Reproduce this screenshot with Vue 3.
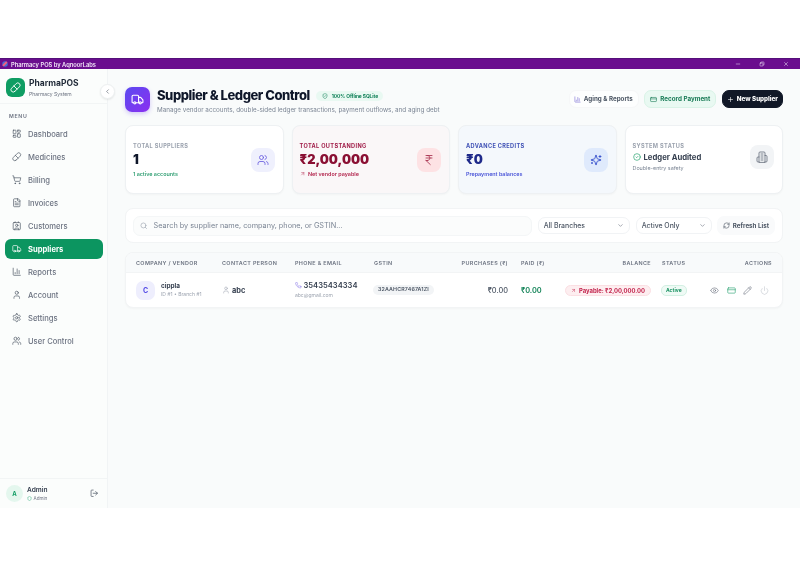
<script setup>
const c = (x, y, r) => `<circle cx="${x}" cy="${y}" r="${r}"/>`
const p = (...ds) => ds.map((d) => `<path d="${d}"/>`).join('')
const r = (x, y, w, h, rx) => `<rect x="${x}" y="${y}" width="${w}" height="${h}" rx="${rx}"/>`
const icons = {
  dashboard: r(3, 3, 7, 9, 1) + r(14, 3, 7, 5, 1) + r(14, 12, 7, 9, 1) + r(3, 16, 7, 5, 1),
  pill: p('m10.5 20.5 10-10a4.95 4.95 0 1 0-7-7l-10 10a4.95 4.95 0 1 0 7 7Z', 'm8.5 8.5 7 7'),
  cart: c(8, 21, 1) + c(19, 21, 1) + p('M2.05 2.05h2l2.66 12.42a2 2 0 0 0 2 1.58h9.78a2 2 0 0 0 1.95-1.57l1.65-7.43H5.12'),
  file: p('M15 2H6a2 2 0 0 0-2 2v16a2 2 0 0 0 2 2h12a2 2 0 0 0 2-2V7Z', 'M14 2v4a2 2 0 0 0 2 2h4', 'M10 9H8', 'M16 13H8', 'M16 17H8'),
  contact: p('M16 2v2', 'M7 22v-2a2 2 0 0 1 2-2h6a2 2 0 0 1 2 2v2', 'M8 2v2') + c(12, 11, 3) + r(3, 4, 18, 18, 2),
  truck: p('M14 18V6a2 2 0 0 0-2-2H4a2 2 0 0 0-2 2v11a1 1 0 0 0 1 1h2', 'M15 18H9', 'M19 18h2a1 1 0 0 0 1-1v-3.65a1 1 0 0 0-.22-.624l-3.48-4.35A1 1 0 0 0 17.52 8H14') + c(17, 18, 2) + c(7, 18, 2),
  chart: p('M3 3v16a2 2 0 0 0 2 2h16', 'M18 17V9', 'M13 17V5', 'M8 17v-3'),
  user: p('M19 21v-2a4 4 0 0 0-4-4H9a4 4 0 0 0-4 4v2') + c(12, 7, 4),
  settings: p('M12.22 2h-.44a2 2 0 0 0-2 2v.18a2 2 0 0 1-1 1.73l-.43.25a2 2 0 0 1-2 0l-.15-.08a2 2 0 0 0-2.73.73l-.22.38a2 2 0 0 0 .73 2.73l.15.1a2 2 0 0 1 1 1.72v.51a2 2 0 0 1-1 1.74l-.15.09a2 2 0 0 0-.73 2.73l.22.38a2 2 0 0 0 2.73.73l.15-.08a2 2 0 0 1 2 0l.43.25a2 2 0 0 1 1 1.73V20a2 2 0 0 0 2 2h.44a2 2 0 0 0 2-2v-.18a2 2 0 0 1 1-1.73l.43-.25a2 2 0 0 1 2 0l.15.08a2 2 0 0 0 2.73-.73l.22-.39a2 2 0 0 0-.73-2.73l-.15-.08a2 2 0 0 1-1-1.74v-.5a2 2 0 0 1 1-1.74l.15-.09a2 2 0 0 0 .73-2.73l-.22-.38a2 2 0 0 0-2.73-.73l-.15.08a2 2 0 0 1-2 0l-.43-.25a2 2 0 0 1-1-1.73V4a2 2 0 0 0-2-2z') + c(12, 12, 3),
  users: p('M16 21v-2a4 4 0 0 0-4-4H6a4 4 0 0 0-4 4v2', 'M22 21v-2a4 4 0 0 0-3-3.87', 'M16 3.13a4 4 0 0 1 0 7.75') + c(9, 7, 4),
  logout: p('M9 21H5a2 2 0 0 1-2-2V5a2 2 0 0 1 2-2h4', 'm16 17 5-5-5-5', 'M21 12H9'),
  shield: p('M20 13c0 5-3.5 7.5-7.66 8.95a1 1 0 0 1-.67-.01C7.5 20.5 4 18 4 13V6a1 1 0 0 1 1-1c2 0 4.5-1.2 6.24-2.72a1.17 1.17 0 0 1 1.52 0C14.51 3.81 17 5 19 5a1 1 0 0 1 1 1z'),
  shieldCheck: p('M20 13c0 5-3.5 7.5-7.66 8.95a1 1 0 0 1-.67-.01C7.5 20.5 4 18 4 13V6a1 1 0 0 1 1-1c2 0 4.5-1.2 6.24-2.72a1.17 1.17 0 0 1 1.52 0C14.51 3.81 17 5 19 5a1 1 0 0 1 1 1z', 'm9 12 2 2 4-4'),
  chevronLeft: p('m15 18-6-6 6-6'),
  chevronDown: p('m6 9 6 6 6-6'),
  card: r(2, 5, 20, 14, 2) + p('M2 10h20'),
  plus: p('M5 12h14', 'M12 5v14'),
  rupee: p('M6 3h12', 'M6 8h12', 'm6 13 8.5 8', 'M6 13h3', 'M9 13c6.667 0 6.667-10 0-10'),
  arrowUpRight: p('M7 7h10v10', 'M7 17 17 7'),
  sparkles: p('M9.937 15.5A2 2 0 0 0 8.5 14.063l-6.135-1.582a.5.5 0 0 1 0-.962L8.5 9.936A2 2 0 0 0 9.937 8.5l1.582-6.135a.5.5 0 0 1 .963 0L14.063 8.5A2 2 0 0 0 15.5 9.937l6.135 1.581a.5.5 0 0 1 0 .964L15.5 14.063a2 2 0 0 0-1.437 1.437l-1.582 6.135a.5.5 0 0 1-.963 0z', 'M20 3v4', 'M22 5h-4', 'M4 17v2', 'M5 18H3'),
  checkCircle: c(12, 12, 10) + p('m9 12 2 2 4-4'),
  building: p('M6 22V4a2 2 0 0 1 2-2h8a2 2 0 0 1 2 2v18Z', 'M6 12H4a2 2 0 0 0-2 2v6a2 2 0 0 0 2 2h2', 'M18 9h2a2 2 0 0 1 2 2v9a2 2 0 0 1-2 2h-2', 'M10 6h4', 'M10 10h4', 'M10 14h4', 'M10 18h4'),
  search: c(11, 11, 8) + p('m21 21-4.3-4.3'),
  refresh: p('M3 12a9 9 0 0 1 9-9 9.75 9.75 0 0 1 6.74 2.74L21 8', 'M21 3v5h-5', 'M21 12a9 9 0 0 1-9 9 9.75 9.75 0 0 1-6.74-2.74L3 16', 'M8 16H3v5'),
  phone: p('M22 16.92v3a2 2 0 0 1-2.18 2 19.79 19.79 0 0 1-8.63-3.07 19.5 19.5 0 0 1-6-6 19.79 19.79 0 0 1-3.07-8.67A2 2 0 0 1 4.11 2h3a2 2 0 0 1 2 1.72 12.84 12.84 0 0 0 .7 2.81 2 2 0 0 1-.45 2.11L8.09 9.91a16 16 0 0 0 6 6l1.27-1.27a2 2 0 0 1 2.11-.45 12.84 12.84 0 0 0 2.81.7A2 2 0 0 1 22 16.92z'),
  eye: p('M2.062 12.348a1 1 0 0 1 0-.696 10.75 10.75 0 0 1 19.876 0 1 1 0 0 1 0 .696 10.75 10.75 0 0 1-19.876 0') + c(12, 12, 3),
  pencil: p('M21.174 6.812a1 1 0 0 0-3.986-3.987L3.842 16.174a2 2 0 0 0-.5.83l-1.321 4.352a.5.5 0 0 0 .623.622l4.353-1.32a2 2 0 0 0 .83-.497z', 'm15 5 4 4'),
  power: p('M12 2v10', 'M18.4 6.6a9 9 0 1 1-12.77.04'),
  minus: p('M5 12h14'),
  restore: r(4, 8, 12, 12, 2) + p('M8 8V6a2 2 0 0 1 2-2h8a2 2 0 0 1 2 2v8a2 2 0 0 1-2 2h-2'),
  close: p('M18 6 6 18', 'm6 6 12 12')
}
const nav = [
  ['Dashboard', 'dashboard'], ['Medicines', 'pill'], ['Billing', 'cart'], ['Invoices', 'file'],
  ['Customers', 'contact'], ['Suppliers', 'truck'], ['Reports', 'chart'], ['Account', 'user'],
  ['Settings', 'settings'], ['User Control', 'users']
]
const heads = [
  ['COMPANY / VENDOR', ''], ['CONTACT PERSON', ''], ['PHONE & EMAIL', ''], ['GSTIN', ''],
  ['PURCHASES (₹)', 'end'], ['PAID (₹)', ''], ['BALANCE', 'end'], ['STATUS', ''], ['ACTIONS', 'last']
]
</script>

<template>
  <div class="window">
    <header class="titlebar">
      <div class="title-left">
        <svg class="app-ico" viewBox="0 0 24 24">
          <circle cx="12" cy="12" r="11" fill="#3f6fd8" />
          <path d="M6 17 17 6" stroke="#f0607f" stroke-width="8" stroke-linecap="round" />
        </svg>
        <span>Pharmacy POS by AqnoorLabs</span>
      </div>
      <div class="win-btns">
        <svg class="ico" viewBox="0 0 24 24" v-html="icons.minus"></svg>
        <svg class="ico" viewBox="0 0 24 24" v-html="icons.restore"></svg>
        <svg class="ico" viewBox="0 0 24 24" v-html="icons.close"></svg>
      </div>
    </header>
    <div class="shell">
      <aside class="sidebar">
        <div class="brand">
          <div class="logo"><svg class="ico" viewBox="0 0 24 24" v-html="icons.pill"></svg></div>
          <div>
            <div class="brand-name">PharmaPOS</div>
            <div class="brand-sub">Pharmacy System</div>
          </div>
        </div>
        <button class="collapse"><svg class="ico" viewBox="0 0 24 24" v-html="icons.chevronLeft"></svg></button>
        <div class="menu-label">MENU</div>
        <nav class="nav">
          <a v-for="n in nav" :key="n[0]" class="nav-item" :class="{ active: n[0] === 'Suppliers' }">
            <svg class="ico" viewBox="0 0 24 24" v-html="icons[n[1]]"></svg>
            <span>{{ n[0] }}</span>
          </a>
        </nav>
        <div class="side-foot">
          <div class="avatar">A</div>
          <div class="foot-text">
            <div class="foot-name">Admin</div>
            <div class="foot-role"><svg class="ico" viewBox="0 0 24 24" v-html="icons.shield"></svg>Admin</div>
          </div>
          <svg class="ico logout" viewBox="0 0 24 24" v-html="icons.logout"></svg>
        </div>
      </aside>
      <main class="main">
        <section class="page-head">
          <div class="head-ico"><svg class="ico" viewBox="0 0 24 24" v-html="icons.truck"></svg></div>
          <div class="head-text">
            <div class="title-row">
              <h1>Supplier &amp; Ledger Control</h1>
              <span class="offline"><svg class="ico" viewBox="0 0 24 24" v-html="icons.shieldCheck"></svg>100% Offline SQLite</span>
            </div>
            <p>Manage vendor accounts, double-sided ledger transactions, payment outflows, and aging debt</p>
          </div>
          <div class="head-btns">
            <button class="btn btn-plain"><svg class="ico" viewBox="0 0 24 24" v-html="icons.chart"></svg>Aging &amp; Reports</button>
            <button class="btn btn-green"><svg class="ico" viewBox="0 0 24 24" v-html="icons.card"></svg>Record Payment</button>
            <button class="btn btn-dark"><svg class="ico" viewBox="0 0 24 24" v-html="icons.plus"></svg>New Supplier</button>
          </div>
        </section>

        <section class="stats">
          <div class="stat">
            <div class="stat-main">
              <div class="stat-label">TOTAL SUPPLIERS</div>
              <div class="stat-value">1</div>
              <div class="stat-note note-green">1 active accounts</div>
            </div>
            <div class="stat-ico ico-violet"><svg class="ico" viewBox="0 0 24 24" v-html="icons.users"></svg></div>
          </div>
          <div class="stat stat-red">
            <div class="stat-main">
              <div class="stat-label label-red">TOTAL OUTSTANDING</div>
              <div class="stat-value value-red">₹2,00,000</div>
              <div class="stat-note note-red"><svg class="ico" viewBox="0 0 24 24" v-html="icons.arrowUpRight"></svg>Net vendor payable</div>
            </div>
            <div class="stat-ico ico-red"><svg class="ico" viewBox="0 0 24 24" v-html="icons.rupee"></svg></div>
          </div>
          <div class="stat stat-blue">
            <div class="stat-main">
              <div class="stat-label label-blue">ADVANCE CREDITS</div>
              <div class="stat-value value-blue">₹0</div>
              <div class="stat-note note-blue">Prepayment balances</div>
            </div>
            <div class="stat-ico ico-blue"><svg class="ico" viewBox="0 0 24 24" v-html="icons.sparkles"></svg></div>
          </div>
          <div class="stat">
            <div class="stat-sys">
              <div class="stat-label">SYSTEM STATUS</div>
              <div class="audited"><svg class="ico" viewBox="0 0 24 24" v-html="icons.checkCircle"></svg>Ledger Audited</div>
              <div class="stat-note note-gray">Double-entry safety</div>
            </div>
            <div class="stat-ico ico-gray"><svg class="ico" viewBox="0 0 24 24" v-html="icons.building"></svg></div>
          </div>
        </section>

        <section class="filters">
          <div class="search">
            <svg class="ico" viewBox="0 0 24 24" v-html="icons.search"></svg>
            <span>Search by supplier name, company, phone, or GSTIN...</span>
          </div>
          <div class="select sel-branch"><span>All Branches</span><svg class="ico" viewBox="0 0 24 24" v-html="icons.chevronDown"></svg></div>
          <div class="select sel-active"><span>Active Only</span><svg class="ico" viewBox="0 0 24 24" v-html="icons.chevronDown"></svg></div>
          <button class="refresh"><svg class="ico" viewBox="0 0 24 24" v-html="icons.refresh"></svg>Refresh List</button>
        </section>

        <section class="table">
          <div class="row head">
            <div v-for="h in heads" :key="h[0]" class="cell" :class="h[1]">{{ h[0] }}</div>
          </div>
          <div class="row body">
            <div class="cell company">
              <div class="co-avatar">C</div>
              <div>
                <div class="co-name">cippla</div>
                <div class="co-sub">ID #1 • Branch #1</div>
              </div>
            </div>
            <div class="cell contact"><svg class="ico" viewBox="0 0 24 24" v-html="icons.user"></svg>abc</div>
            <div class="cell phone">
              <div class="ph"><svg class="ico" viewBox="0 0 24 24" v-html="icons.phone"></svg>35435434334</div>
              <div class="mail">abc@gmail.com</div>
            </div>
            <div class="cell pillcell"><span class="gst">32AAHCR7467A1ZI</span></div>
            <div class="cell end amount">₹0.00</div>
            <div class="cell amount paid">₹0.00</div>
            <div class="cell end pillcell"><span class="payable"><svg class="ico" viewBox="0 0 24 24" v-html="icons.arrowUpRight"></svg>Payable: ₹2,00,000.00</span></div>
            <div class="cell pillcell"><span class="active-pill">Active</span></div>
            <div class="cell last actions">
              <svg class="ico a-eye" viewBox="0 0 24 24" v-html="icons.eye"></svg>
              <svg class="ico a-card" viewBox="0 0 24 24" v-html="icons.card"></svg>
              <svg class="ico a-pen" viewBox="0 0 24 24" v-html="icons.pencil"></svg>
              <svg class="ico a-pow" viewBox="0 0 24 24" v-html="icons.power"></svg>
            </div>
          </div>
        </section>
      </main>
    </div>
  </div>
</template>

<style>
html, body { margin: 0; background: #fff; }
</style>

<style scoped>
* { box-sizing: border-box; }
.ico { fill: none; stroke: currentColor; stroke-width: 2; stroke-linecap: round; stroke-linejoin: round; display: block; flex: none; width: 10px; height: 10px; }
.window { margin-top: 58px; height: 450px; display: flex; flex-direction: column; font-family: Inter, "Noto Sans", sans-serif; color: #1f2937; overflow: hidden; filter: blur(.3px); }
.titlebar { height: 11px; background: #6a0d8e; border-top: 1px solid #55107a; color: #f3e8f8; display: flex; align-items: center; justify-content: space-between; font-size: 5.75px; font-weight: 600; padding: 0 11px 0 2px; flex: none; }
.title-left { display: flex; align-items: center; gap: 3px; }
.app-ico { width: 6px; height: 6px; display: block; }
.win-btns { display: flex; gap: 18px; }
.win-btns .ico { width: 6px; height: 6px; }
.shell { flex: 1; display: flex; min-height: 0; background: #f9fbfb; }

.sidebar { width: 108px; flex: none; display: flex; flex-direction: column; background: #fbfdfc; border-right: 1px solid #f1f4f5; position: relative; }
.brand { height: 35px; padding: 9px 5px 0 6px; display: flex; gap: 4px; border-bottom: 1px solid #f2f5f5; flex: none; }
.logo { width: 19px; height: 19px; border-radius: 6px; background: #0f9d63; color: #fff; display: flex; align-items: center; justify-content: center; }
.logo .ico { width: 11px; height: 11px; }
.brand-name { font-size: 8.5px; font-weight: 700; color: #1f2937; line-height: 11px; }
.brand-sub { font-size: 5px; color: #6b7280; line-height: 8px; margin-top: 1px; }
.collapse { position: absolute; left: 100px; top: 15px; width: 15px; height: 15px; border-radius: 50%; border: 1px solid #edf0f1; background: #fff; color: #4b5563; padding: 0; display: flex; align-items: center; justify-content: center; box-shadow: 0 1px 2px rgba(0,0,0,.08); }
.collapse .ico { width: 7px; height: 7px; }
.menu-label { font-size: 5.2px; font-weight: 600; letter-spacing: .7px; color: #6b7280; margin: 8px 0 0 9px; line-height: 8px; }
.nav { display: flex; flex-direction: column; gap: 3px; padding: 4px 4px 0 5px; }
.nav-item { height: 20px; border-radius: 6px; display: flex; align-items: center; gap: 6.5px; padding-left: 7px; font-size: 7.6px; font-weight: 500; color: #6b7280; }
.nav-item .ico { width: 9.5px; height: 9.5px; color: #4b5563; stroke-width: 1.7; }
.nav-item.active { background: #0c9560; color: #fff; font-weight: 700; }
.nav-item.active .ico { color: #fff; }
.side-foot { margin-top: auto; height: 30px; display: flex; align-items: center; padding: 0 9px 0 5px; gap: 4px; border-top: 1px solid #f2f5f5; }
.avatar { width: 17px; height: 17px; border-radius: 50%; background: #e4f7ee; color: #0f9d63; font-size: 6px; font-weight: 700; display: flex; align-items: center; justify-content: center; margin-left: 1px; }
.foot-text { flex: 1; padding-top: 1px; }
.foot-name { font-size: 6.6px; font-weight: 600; color: #374151; line-height: 8px; }
.foot-role { display: flex; align-items: center; gap: 1.5px; font-size: 4.6px; color: #6b7280; line-height: 7px; margin-top: 1px; }
.foot-role .ico { width: 5px; height: 5px; color: #10a06b; }
.logout { width: 8.5px; height: 8.5px; color: #4b5563; }

.main { flex: 1; min-width: 0; padding: 18px 17px 0; display: flex; flex-direction: column; }
.page-head { display: flex; align-items: flex-start; height: 25px; }
.head-ico { width: 25px; height: 25px; border-radius: 7px; background: linear-gradient(135deg, #5b4af0, #8b2ff0); color: #fff; display: flex; align-items: center; justify-content: center; box-shadow: 0 2px 4px rgba(99,60,240,.25); }
.head-ico .ico { width: 13px; height: 13px; }
.head-text { margin-left: 7px; flex: 1; }
.title-row { display: flex; align-items: center; gap: 6px; margin-top: 1px; height: 15px; }
h1 { margin: 0; font-size: 13px; font-weight: 800; color: #0f172a; line-height: 15px; letter-spacing: -.46px; white-space: nowrap; }
.offline { display: flex; align-items: center; gap: 4px; background: #e9f9f2; border-radius: 8px; height: 10px; padding: 0 5px 0 6px; font-size: 4.9px; font-weight: 700; color: #0c7f55; white-space: nowrap; letter-spacing: -.08px; }
.offline .ico { width: 6px; height: 6px; }
p { margin: 3px 0 0; font-size: 6.3px; color: #7b8594; line-height: 8px; white-space: nowrap; }
.head-btns { display: flex; gap: 5.5px; margin-top: 3px; }
.btn { height: 18px; border-radius: 7px; padding: 0 5px; display: flex; align-items: center; gap: 3px; font: 700 6.25px Inter, sans-serif; border: 1px solid transparent; white-space: nowrap; }
.btn .ico { width: 7px; height: 7px; }
.btn-plain { background: #fdfefe; color: #4b5563; border-color: #f6f7f8; padding: 0 5px 0 4px; }
.btn-plain .ico { color: #7c6fd6; }
.btn-green { background: #e9f9f2; color: #177a55; border-color: #d9f3e7; }
.btn-dark { background: #111827; color: #fff; font-weight: 800; padding: 0 4px; border-color: #111827; }

.stats { display: grid; grid-template-columns: repeat(4, 1fr); gap: 8px; margin-top: 13px; height: 69px; }
.stat { background: #fff; border: 1px solid #eef1f3; border-radius: 8px; padding: 0 8px 0 7px; display: flex; align-items: center; justify-content: space-between; box-shadow: 0 1px 2px rgba(15,23,42,.03); }
.stat-red { background: #faf7f8; }
.stat-blue { background: #f4f8fc; }
.stat-main { padding-top: 1px; }
.stat-label { font-size: 5.6px; font-weight: 700; letter-spacing: .35px; color: #9ca3af; line-height: 7px; white-space: nowrap; }
.label-red { color: #a01c48; }
.label-blue { color: #3f51b5; }
.stat-value { font-size: 12.8px; font-weight: 900; color: #0f172a; line-height: 16px; margin-top: 2px; white-space: nowrap; }
.value-red { color: #8a0f33; }
.value-blue { color: #1e2a8a; }
.stat-note { font-size: 5.4px; font-weight: 600; line-height: 7px; margin-top: 3px; display: flex; align-items: center; gap: 3px; white-space: nowrap; }
.stat-note .ico { width: 5.5px; height: 5.5px; }
.note-green { color: #2f9e72; }
.note-red { color: #b3274f; }
.note-blue { color: #4a55d8; }
.note-gray { color: #7b8594; font-weight: 400; margin-top: 2px; }
.stat-ico { width: 24px; height: 24px; border-radius: 8px; display: flex; align-items: center; justify-content: center; }
.stat-ico .ico { width: 12px; height: 12px; stroke-width: 1.7; }
.ico-violet { background: #eff0fd; color: #6a5fe0; }
.ico-red { background: #fde2e4; color: #a8324f; }
.ico-blue { background: #dfeafc; color: #2b46c9; }
.ico-gray { background: #f2f4f6; color: #6b7280; margin-top: -6px; }
.stat-sys { margin-top: -5px; }
.audited { display: flex; align-items: center; gap: 3px; font-size: 7.7px; font-weight: 700; color: #374151; line-height: 11px; margin-top: 2px; white-space: nowrap; }
.audited .ico { width: 8px; height: 8px; color: #22a06b; }

.filters { margin-top: 14px; height: 35px; background: #fff; border: 1px solid #f2f4f5; border-radius: 8px; display: flex; align-items: center; padding: 0 7px; gap: 6px; }
.search { flex: 1; height: 20px; border-radius: 7px; border: 1px solid #f4f6f7; background: #fbfcfc; display: flex; align-items: center; gap: 6px; padding: 0 6px; font-size: 7.3px; color: #7b8594; }
.search .ico { width: 7.5px; height: 7.5px; color: #9ca3af; }
.select { height: 17px; border-radius: 7px; border: 1px solid #f1f3f5; background: #fff; display: flex; align-items: center; justify-content: space-between; padding: 0 5px; font-size: 6.9px; font-weight: 500; color: #4b5563; }
.select .ico { width: 7px; height: 7px; color: #6b7280; }
.sel-branch { width: 92px; }
.sel-active { width: 76px; }
.refresh { height: 19px; border-radius: 7px; border: 0; background: #f9fafb; padding: 0 6px; display: flex; align-items: center; gap: 3px; font: 700 6.25px Inter, sans-serif; color: #4b5563; white-space: nowrap; margin-left: -1px; }
.refresh .ico { width: 7px; height: 7px; }

.table { margin-top: 9px; background: #fff; border: 1px solid #f2f4f5; border-radius: 8px; overflow: hidden; box-shadow: 0 1px 2px rgba(15,23,42,.03); }
.row { display: grid; grid-template-columns: 86px 73px 79px 80px 67px 44px 97px 48px 62px; padding-left: 10px; align-items: center; }
.head { height: 20px; background: #f8fafb; font-size: 5.45px; font-weight: 600; letter-spacing: .35px; color: #6b7280; border-bottom: 1px solid #f2f4f5; white-space: nowrap; }
.body { height: 34px; }
.cell { white-space: nowrap; }
.end { text-align: right; justify-self: end; padding-right: 13px; }
.cell.end:nth-child(7) { padding-right: 11px; }
.last { justify-self: end; }
.pillcell { display: flex; align-items: center; }
.company { display: flex; align-items: center; gap: 6px; }
.co-avatar { width: 19px; height: 19px; border-radius: 7px; background: #eeeefd; color: #4f46e5; font-size: 7px; font-weight: 700; display: flex; align-items: center; justify-content: center; }
.co-name { font-size: 6.4px; font-weight: 700; color: #374151; line-height: 8px; }
.co-sub { font-size: 5px; color: #9ca3af; line-height: 7px; margin-top: 1px; }
.contact { display: flex; align-items: center; gap: 2px; font-size: 7.4px; font-weight: 700; color: #374151; }
.contact .ico { width: 8px; height: 8px; color: #9ca3af; stroke-width: 1.6; }
.ph { display: flex; align-items: center; gap: 2px; font-size: 7.6px; font-weight: 600; color: #374151; line-height: 9px; }
.ph .ico { width: 6.5px; height: 6.5px; color: #8b7be8; }
.mail { font-size: 5px; color: #9ca3af; line-height: 7px; margin-top: 2.5px; }
.gst { display: block; background: #f2f4f6; border-radius: 5px; height: 9.5px; line-height: 9.5px; padding: 0 5px; font-size: 5.3px; font-weight: 600; color: #4b5563; letter-spacing: .15px; margin-left: -1px; }
.amount { font-size: 7.4px; font-weight: 500; color: #4b5563; }
.paid { color: #16855a; font-weight: 600; }
.payable { display: inline-flex; align-items: center; gap: 2.5px; height: 11px; background: #fdeef0; border: 1px solid #fbdfe3; border-radius: 6px; padding: 0 5px; font-size: 5.9px; font-weight: 700; color: #c2234c; }
.payable .ico { width: 5px; height: 5px; }
.active-pill { display: block; border: 1px solid #d3f0e3; background: #effaf5; color: #15905f; border-radius: 5px; height: 11px; line-height: 9px; padding: 0 4px; font-size: 5px; font-weight: 700; margin-left: -1px; }
.actions { display: flex; gap: 7.7px; align-items: center; padding-right: 3px; }
.actions .ico { width: 9px; height: 9px; stroke-width: 1.6; }
.a-eye { color: #6b7280; }
.a-card { color: #22a06b; }
.a-pen { color: #6b7280; }
.a-pow { color: #c3c8cf; }
</style>
